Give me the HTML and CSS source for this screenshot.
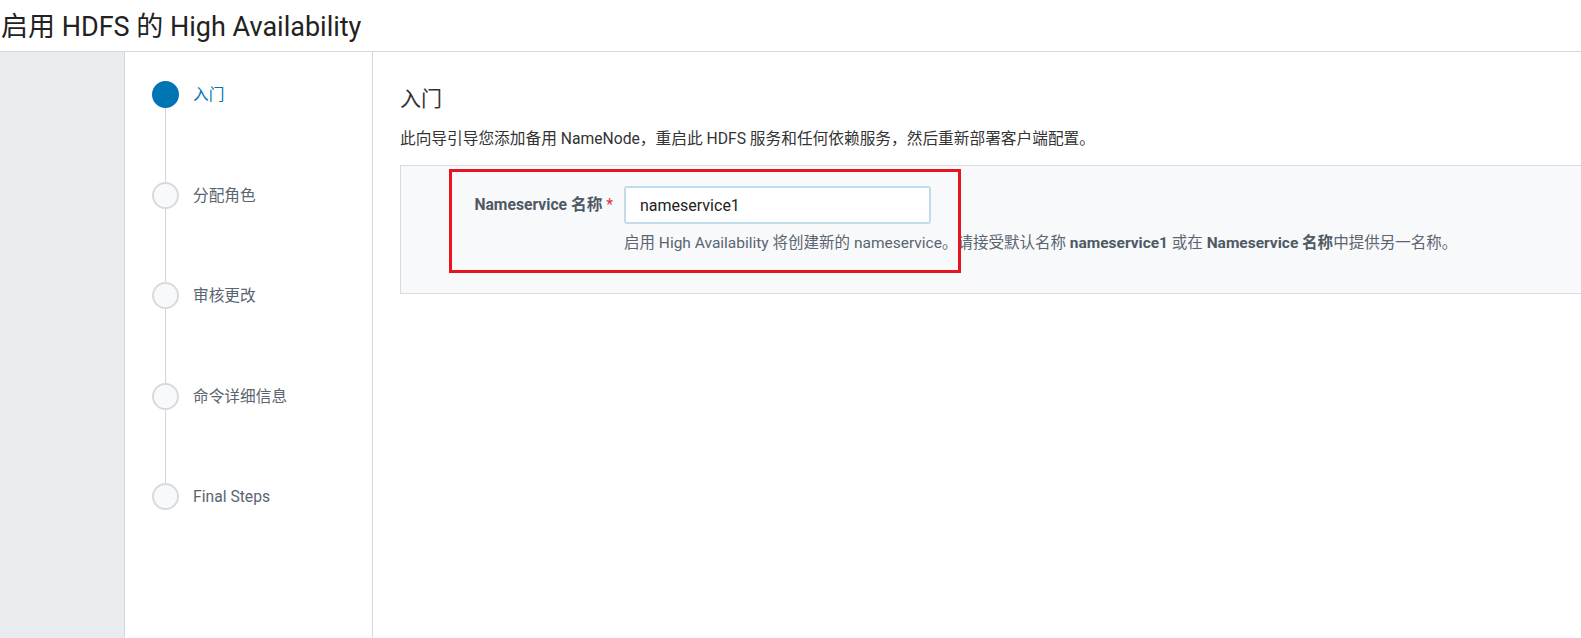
FILE: index.html
```html
<!DOCTYPE html>
<html lang="zh-CN">
<head>
    <meta charset="UTF-8">
    <meta name="viewport" content="width=device-width, initial-scale=1.0">
    <title>启用 HDFS 的 High Availability</title>
    <link rel="stylesheet" href="styles.css">
</head>
<body>
    <div class="page-header">
        <h1 class="page-title">启用 HDFS 的 High Availability</h1>
    </div>
    <div class="wizard">
        <div class="side-gutter"></div>
        <div class="steps">
            <div class="step active">
                <div class="step-marker"><span class="dot"></span><span class="line"></span></div>
                <span class="step-label">入门</span>
            </div>
            <div class="step">
                <div class="step-marker"><span class="dot"></span><span class="line"></span></div>
                <span class="step-label">分配角色</span>
            </div>
            <div class="step">
                <div class="step-marker"><span class="dot"></span><span class="line"></span></div>
                <span class="step-label">审核更改</span>
            </div>
            <div class="step">
                <div class="step-marker"><span class="dot"></span><span class="line"></span></div>
                <span class="step-label">命令详细信息</span>
            </div>
            <div class="step last">
                <div class="step-marker"><span class="dot"></span></div>
                <span class="step-label">Final Steps</span>
            </div>
        </div>
        <div class="content">
            <h2 class="content-title">入门</h2>
            <p class="intro">此向导引导您添加备用 NameNode，重启此 HDFS 服务和任何依赖服务，然后重新部署客户端配置。</p>
            <div class="form-panel">
                <div class="form-row">
                    <label class="field-label" for="ns-input">Nameservice 名称 <span class="required">*</span></label>
                    <div class="field">
                        <input type="text" id="ns-input" class="text-input" value="nameservice1">
                        <p class="help">启用 High Availability 将创建新的 nameservice。请接受默认名称 <b>nameservice1</b> 或在 <b>Nameservice 名称</b>中提供另一名称。</p>
                    </div>
                </div>
                <div class="highlight-box"></div>
            </div>
        </div>
    </div>
</body>
</html>
```

FILE: styles.css
```css
body {
    margin: 0;
    padding: 0;
    background-color: #ffffff;
    color: #333;
    font-family: Roboto, "Noto Sans CJK SC", sans-serif;
    height: 100vh;
    display: flex;
    flex-direction: column;
    overflow: hidden;
}
.page-header {
    height: 51px;
    border-bottom: 1px solid #d6d8db;
    display: flex;
    align-items: center;
    flex-shrink: 0;
}
.page-title {
    margin: 0 0 2px 1px;
    font-size: 27px;
    font-weight: 400;
    color: #222;
}
.wizard {
    flex: 1;
    display: flex;
}
.side-gutter {
    width: 124px;
    background-color: #e9ecef;
    border-right: 1px solid #d6d8db;
}
.steps {
    width: 248px;
    border-right: 1px solid #d6d8db;
    padding: 29px 0 0 27px;
    box-sizing: border-box;
}
.step {
    display: flex;
    height: 100.5px;
}
.step-marker {
    width: 27px;
    display: flex;
    flex-direction: column;
    align-items: center;
}
.dot {
    width: 27px;
    height: 27px;
    box-sizing: border-box;
    border-radius: 50%;
    border: 2px solid #d8dadd;
    background-color: #f7f9fb;
    flex-shrink: 0;
}
.line {
    flex: 1;
    width: 1px;
    background-color: #d4d4d4;
}
.step.active .dot {
    background-color: #0075b3;
    border-color: #0075b3;
}
.step-label {
    margin-left: 14px;
    line-height: 27px;
    font-size: 15.7px;
    color: #5a6570;
}
.step.active .step-label {
    color: #0075b3;
}
.content {
    flex: 1;
    padding: 35px 0 0 27px;
    min-width: 0;
}
.content-title {
    margin: 0;
    font-size: 21px;
    font-weight: 400;
    line-height: 24px;
    color: #333;
}
.intro {
    margin: 17px 0 15px;
    font-size: 15.7px;
    line-height: 22px;
    color: #333;
}
.form-panel {
    position: relative;
    background-color: #f8f9fb;
    border: 1px solid #d9dbde;
    border-right: none;
    padding: 20px 0 39px;
}
.form-row {
    display: flex;
}
.field-label {
    width: 223px;
    flex-shrink: 0;
    box-sizing: border-box;
    text-align: right;
    padding-right: 11px;
    font-size: 15.7px;
    font-weight: 700;
    color: #4f5a64;
    line-height: 38px;
}
.required {
    color: #e03131;
    font-weight: 400;
}
.text-input {
    width: 307px;
    height: 38px;
    box-sizing: border-box;
    border: 2px solid #c3dcec;
    border-radius: 3px;
    padding: 0 14px;
    font-family: Roboto, "Noto Sans CJK SC", sans-serif;
    font-size: 16px;
    color: #222;
    background-color: #fff;
    outline: none;
}
.help {
    margin: 8px 0 0 0;
    font-size: 15.5px;
    line-height: 22px;
    color: #5a6570;
}
.help b {
    color: #4f5a64;
}
/* red annotation drawn over the form */
.highlight-box {
    position: absolute;
    left: 48px;
    top: 3px;
    width: 512px;
    height: 104px;
    box-sizing: border-box;
    border: 3px solid #e8141f;
    pointer-events: none;
}
```
